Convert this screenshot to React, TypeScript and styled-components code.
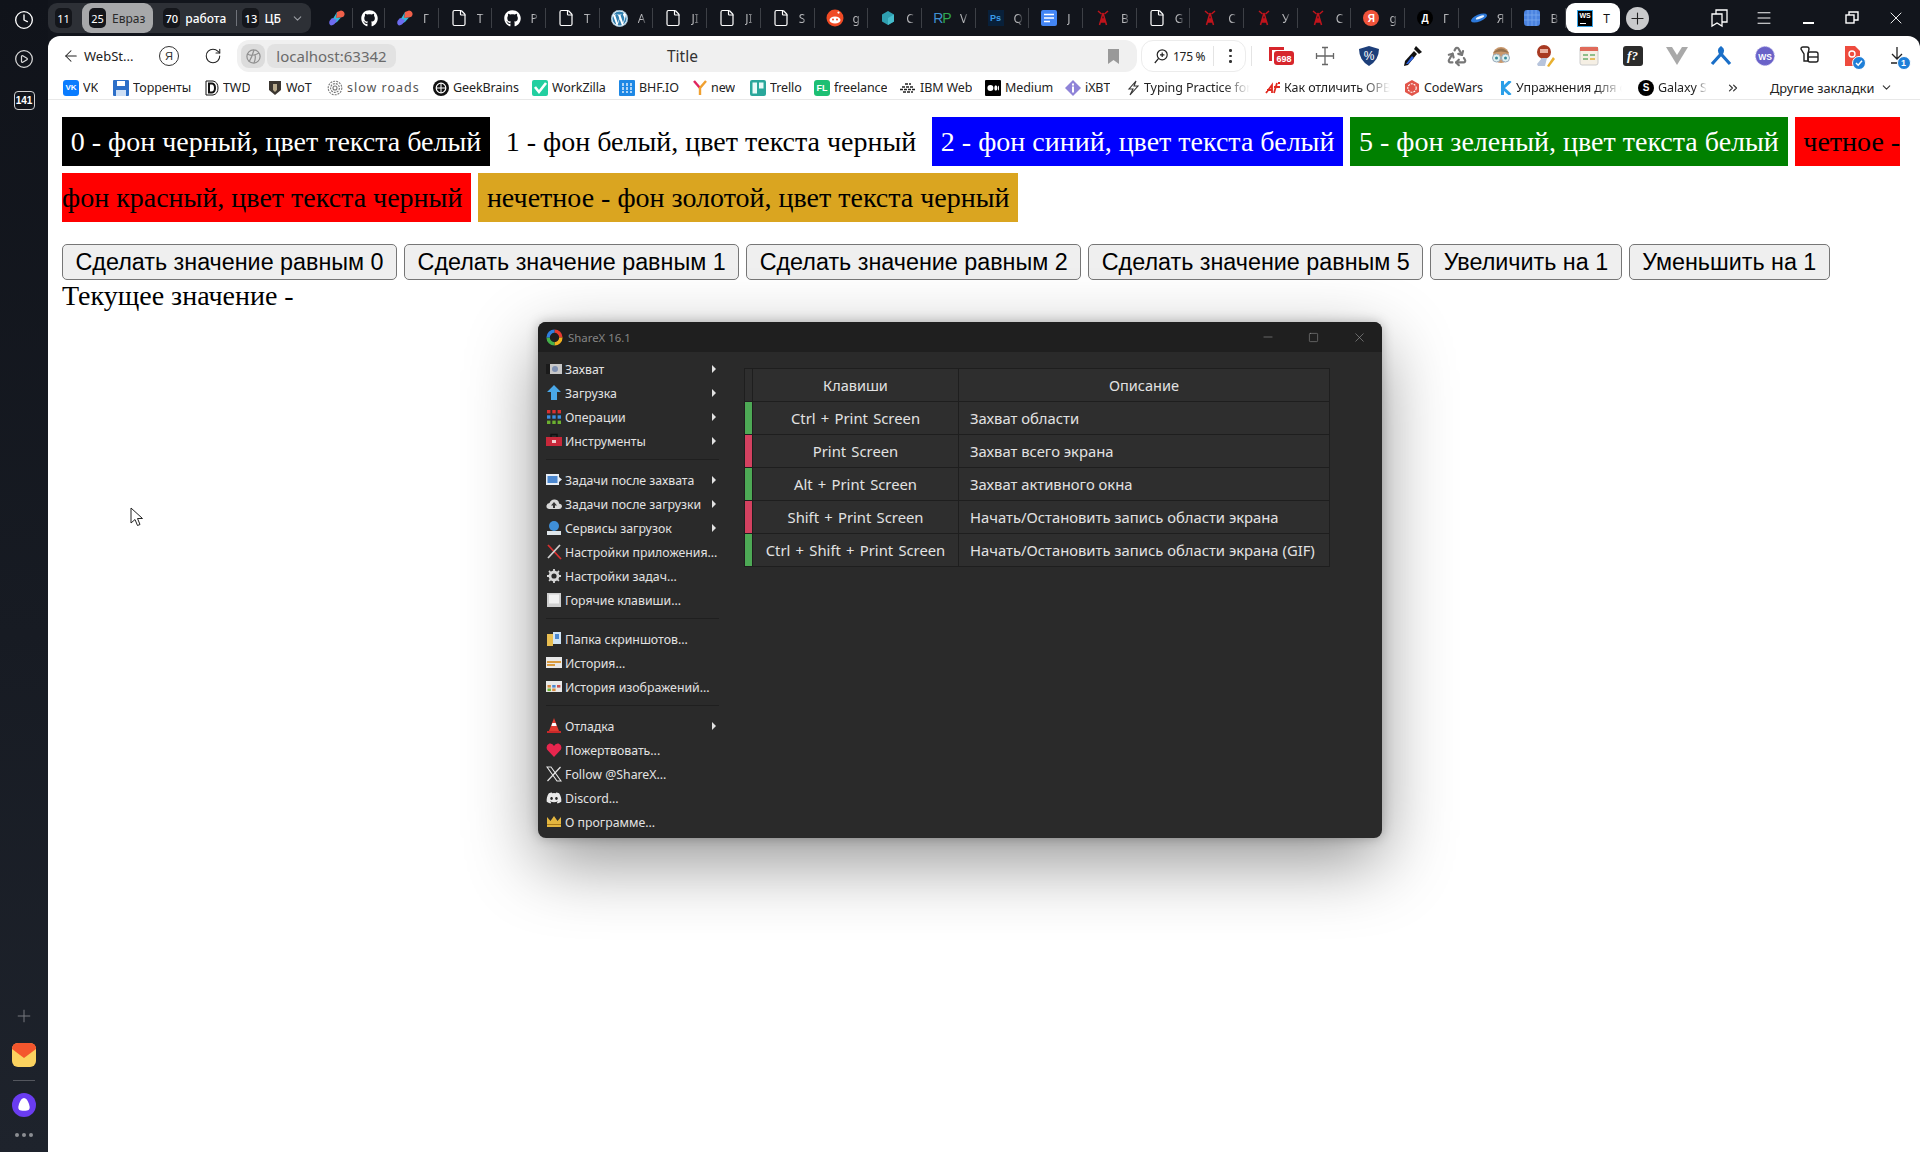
import { Fragment, ReactNode } from "react";
import styled, { createGlobalStyle } from "styled-components";
import {
  ArrowLeft,
  ChevronDown,
  ChevronsRight,
  CirclePlay,
  Clock,
  File,
  Menu as MenuIcon,
  Minus,
  Plus,
  Recycle,
  RotateCw,
  Square,
  X
} from "lucide-react";
import { FaDiscord, FaGithub, FaWordpress } from "react-icons/fa";

const GlobalStyle = createGlobalStyle`
  html, body {
    margin: 0;
    padding: 0;
    background: #fff;
  }
`;

// drawn favicons
const FigmaBlob = () => (
  <svg width="18" height="18" viewBox="0 0 18 18">
    <path d="M9 3 L13 1.5 Q17 2 16.5 6 Q16 8 13 8.5 L8 9 Z" fill="#f0604a" />
    <path d="M9 3 L8 9 L13 8.5 L9 13 Q6 15 3 13 Z" fill="#35b8d8" />
    <path d="M4 9 L9 11 Q7 16 3 16.5 Q0.5 15 1.5 12 Z" fill="#6d6cf0" />
  </svg>
);

const GithubFav = () => <FaGithub size={17} color="#fff" />;
const DocFav = () => <File size={18} color="#fff" strokeWidth={1.6} />;

const WordpressFav = () => (
  <WpBack>
    <FaWordpress size={17} color="#2f7fb0" />
  </WpBack>
);

const RedditFav = () => (
  <svg width="18" height="18" viewBox="0 0 18 18">
    <circle cx="9" cy="9" r="8.5" fill="#f04a24" />
    <ellipse cx="9" cy="11" rx="5.5" ry="3.6" fill="#fff" />
    <circle cx="7" cy="10.5" r="1" fill="#f04a24" />
    <circle cx="11" cy="10.5" r="1" fill="#f04a24" />
    <circle cx="12.5" cy="3.6" r="1.1" fill="#fff" />
  </svg>
);

const CubeFav = () => (
  <svg width="16" height="16" viewBox="0 0 16 16">
    <path d="M8 1 L14 4.5 V11.5 L8 15 L2 11.5 V4.5 Z" fill="#2f9fb0" />
    <path d="M8 8 L14 4.5 V11.5 L8 15 Z" fill="#45bccb" />
  </svg>
);

const DocsFav = () => (
  <svg width="16" height="16" viewBox="0 0 16 16">
    <rect width="16" height="16" rx="2" fill="#4285f4" />
    <path d="M3 4.5 H13 M3 8 H13 M3 11.5 H9" stroke="#fff" strokeWidth="1.6" />
  </svg>
);

const TowerFav = () => (
  <svg width="16" height="18" viewBox="0 0 16 18">
    <path
      d="M8 4 L4.5 16 M8 4 L11.5 16 M6 10 H10 M5 13 H11 M6 10 L11 13 M10 10 L5 13 M3 2 L6.5 5 M13 2 L9.5 5"
      stroke="#c0141c"
      strokeWidth="1.5"
      fill="none"
    />
  </svg>
);

const UfoFav = () => (
  <svg width="18" height="18" viewBox="0 0 18 18">
    <ellipse cx="9" cy="9" rx="8.5" ry="3.4" transform="rotate(-22 9 9)" fill="#2c78d8" />
    <ellipse cx="10" cy="8.4" rx="4.5" ry="1.3" transform="rotate(-22 10 8.4)" fill="#eaf4ff" />
  </svg>
);

const BlueFav = () => (
  <svg width="16" height="16" viewBox="0 0 16 16">
    <rect width="16" height="16" rx="3" fill="#4b83e0" />
    <path d="M4 0 V16 M8 0 V16 M12 0 V16 M0 5 H16 M0 10 H16" stroke="#79a9f0" strokeWidth="0.8" />
  </svg>
);

// one entry per browser tab after the group
const getTabs = (): { icon: ReactNode; letter?: string }[] => [
  { icon: <FigmaBlob /> },
  { icon: <GithubFav /> },
  { icon: <FigmaBlob />, letter: "Г" },
  { icon: <DocFav />, letter: "T" },
  { icon: <GithubFav />, letter: "P" },
  { icon: <DocFav />, letter: "T" },
  { icon: <WordpressFav />, letter: "A" },
  { icon: <DocFav />, letter: "JI" },
  { icon: <DocFav />, letter: "JI" },
  { icon: <DocFav />, letter: "S" },
  { icon: <RedditFav />, letter: "g" },
  { icon: <CubeFav />, letter: "C" },
  {
    icon: (
      <RpMark>
        <span>R</span>
        <b>P</b>
      </RpMark>
    ),
    letter: "V"
  },
  { icon: <PsMark>Ps</PsMark>, letter: "Q" },
  { icon: <DocsFav />, letter: "J" },
  { icon: <TowerFav />, letter: "B" },
  { icon: <DocFav />, letter: "G" },
  { icon: <TowerFav />, letter: "C" },
  { icon: <TowerFav />, letter: "У" },
  { icon: <TowerFav />, letter: "C" },
  { icon: <RoundMark $bg="#f0533a" $fg="#fff">Я</RoundMark>, letter: "g" },
  { icon: <RoundMark $bg="#000" $fg="#fff">Д</RoundMark>, letter: "Г" },
  { icon: <UfoFav />, letter: "Я" },
  { icon: <BlueFav />, letter: "B" }
];

// bookmark bar: left edges come from the fixed item widths
const getBookmarks = (): { w: number; label: string; icon: ReactNode; fade?: boolean; spaced?: boolean }[] => [
  { w: 50, label: "VK", icon: <Tile $bg="#0a7cff" $fg="#fff" $size={8}>VK</Tile> },
  {
    w: 92,
    label: "Торренты",
    icon: (
      <svg width="16" height="16" viewBox="0 0 16 16">
        <rect width="16" height="16" rx="1" fill="#2d6fc8" />
        <rect x="4" y="1" width="8" height="5" fill="#fff" />
        <rect x="3" y="10" width="10" height="6" fill="#cfe0f5" />
      </svg>
    )
  },
  {
    w: 63,
    label: "TWD",
    icon: (
      <svg width="14" height="16" viewBox="0 0 14 16" fill="none" stroke="#111">
        <path d="M1 1 H8 Q13 2 13 8 Q13 14 8 15 H1 Z" strokeWidth="1" />
        <path d="M4 3.5 H7 Q10 4 10 8 Q10 12 7 12.5 H4 Z" strokeWidth="2" />
      </svg>
    )
  },
  {
    w: 59,
    label: "WoT",
    icon: (
      <svg width="14" height="16" viewBox="0 0 14 16">
        <path d="M1 1 H13 V10 L7 15 L1 10 Z" fill="#3b3630" />
        <path d="M5 4 H9 V10 L7 12 L5 10 Z" fill="#b9ab8e" />
      </svg>
    )
  },
  {
    w: 106,
    label: "slow roads",
    spaced: true,
    icon: (
      <svg width="16" height="16" viewBox="0 0 16 16" fill="none" stroke="#777" strokeWidth="1.1">
        <circle cx="8" cy="8" r="6.8" strokeDasharray="2 1" />
        <circle cx="8" cy="8" r="4.4" strokeDasharray="2 1" />
        <circle cx="8" cy="8" r="2" />
      </svg>
    )
  },
  {
    w: 99,
    label: "GeekBrains",
    icon: (
      <svg width="16" height="16" viewBox="0 0 16 16" fill="none">
        <circle cx="8" cy="8" r="8" fill="#111" />
        <circle cx="8" cy="8" r="4.8" stroke="#fff" strokeWidth="1.2" />
        <path d="M8 3 V13 M3 8 H13" stroke="#fff" strokeWidth="1" />
      </svg>
    )
  },
  {
    w: 87,
    label: "WorkZilla",
    icon: (
      <svg width="16" height="16" viewBox="0 0 16 16">
        <rect width="16" height="16" rx="2" fill="#22cfa0" />
        <path d="M3 7 L7 12 L14 3" stroke="#fff" strokeWidth="2.6" fill="none" />
      </svg>
    )
  },
  {
    w: 74,
    label: "BHF.IO",
    icon: (
      <svg width="16" height="16" viewBox="0 0 16 16">
        <rect width="16" height="16" rx="1" fill="#1e88e5" />
        <path d="M4 3 V13 M8 3 V13 M12 3 V13" stroke="#fff" strokeWidth="1.3" strokeDasharray="3 1" />
      </svg>
    )
  },
  {
    w: 57,
    label: "new",
    icon: (
      <svg width="14" height="16" viewBox="0 0 14 16" fill="none" strokeWidth="2.4">
        <path d="M1 1 L7 8" stroke="#e0245e" />
        <path d="M13 1 L7 8 V15" stroke="#f0a030" />
      </svg>
    )
  },
  {
    w: 64,
    label: "Trello",
    icon: (
      <svg width="16" height="16" viewBox="0 0 16 16">
        <rect width="16" height="16" rx="2" fill="#2aa79b" />
        <rect x="2.5" y="2.5" width="4.5" height="11" fill="#e8fbf8" />
        <rect x="9" y="2.5" width="4.5" height="6" fill="#e8fbf8" />
      </svg>
    )
  },
  { w: 86, label: "freelance", icon: <Tile $bg="#1dbf73" $fg="#fff" $size={9}>FL</Tile> },
  {
    w: 85,
    label: "IBM Web",
    icon: (
      <svg width="16" height="12" viewBox="0 0 16 12" stroke="#222" strokeWidth="1.4">
        <path d="M5 2 H11 M2 5 H14 M0 7.5 H16 M3 10 H13" strokeDasharray="3 1" />
      </svg>
    )
  },
  {
    w: 80,
    label: "Medium",
    icon: (
      <svg width="16" height="16" viewBox="0 0 16 16">
        <rect width="16" height="16" rx="1" fill="#000" />
        <circle cx="5.4" cy="8" r="3" fill="#fff" />
        <ellipse cx="10.8" cy="8" rx="1.5" ry="2.8" fill="#fff" />
        <ellipse cx="13.4" cy="8" rx="0.6" ry="2.5" fill="#fff" />
      </svg>
    )
  },
  {
    w: 62,
    label: "iXBT",
    icon: (
      <svg width="16" height="16" viewBox="0 0 16 16">
        <path d="M8 0 L16 8 L8 16 L0 8 Z" fill="#8f83d8" />
        <rect x="7" y="6.5" width="2" height="6" fill="#fff" />
        <rect x="7" y="3.5" width="2" height="2" fill="#fff" />
      </svg>
    )
  },
  {
    w: 138,
    label: "Typing Practice for",
    fade: true,
    icon: (
      <svg width="13" height="16" viewBox="0 0 13 16">
        <path d="M9 1 L2 9 H6 L3 15 L11 6 H7 Z" fill="none" stroke="#333" strokeWidth="1.1" />
      </svg>
    )
  },
  {
    w: 139,
    label: "Как отличить ОРВ",
    fade: true,
    icon: (
      <svg width="15" height="16" viewBox="0 0 15 16" fill="none" stroke="#e02a20" strokeWidth="1.8">
        <path d="M1 13 L7 5 V13 M7 10 H2 M9 13 L12 3 M9 7 H15 M13 3 H15" />
      </svg>
    )
  },
  {
    w: 96,
    label: "CodeWars",
    icon: (
      <svg width="16" height="16" viewBox="0 0 16 16">
        <path d="M8 0 L15 4 V12 L8 16 L1 12 V4 Z" fill="#e2554a" />
        <circle cx="8" cy="8" r="4.2" fill="none" stroke="#fff" strokeWidth="1.1" strokeDasharray="2 1" />
      </svg>
    )
  },
  {
    w: 138,
    label: "Упражнения для с",
    fade: true,
    icon: (
      <svg width="12" height="14" viewBox="0 0 12 14" fill="none" stroke="#2b9fe8" strokeWidth="3">
        <path d="M2.5 0 V14 M10.5 0 L3 7 L10.5 14" />
      </svg>
    )
  },
  {
    w: 82,
    label: "Galaxy S",
    fade: true,
    icon: <RoundMark $bg="#000" $fg="#fff">S</RoundMark>
  }
];

// toolbar extension icons, one 44px slot each
const getExtensions = (): ReactNode[] => [
  <svg key="video" width="26" height="24" viewBox="0 0 26 24">
    <path d="M1 3 H16 V6 H4 V17 H1 Z" fill="#d7262c" />
    <rect x="6" y="7" width="20" height="14" rx="3" fill="#d7262c" />
    <text x="16" y="18" fontSize="9" fontFamily="Liberation Sans" fontWeight="700" fill="#fff" textAnchor="middle">
      698
    </text>
  </svg>,
  <svg key="move" width="20" height="20" viewBox="0 0 20 20" stroke="#666" strokeWidth="1.3">
    <path d="M10 1 V19 M1 10 H19 M7 1.5 H13 M7 18.5 H13 M1.5 7 V13 M18.5 7 V13" />
  </svg>,
  <svg key="shield" width="22" height="22" viewBox="0 0 22 22">
    <path d="M11 1 L21 4 Q21 15 11 21 Q1 15 1 4 Z" fill="#1d3f7a" />
    <text x="11" y="15" fontSize="12" fontFamily="Liberation Sans" fill="#fff" textAnchor="middle">
      %
    </text>
  </svg>,
  <svg key="dropper" width="20" height="22" viewBox="0 0 20 22">
    <path d="M13 1 L19 7 L16 9 L11 4 Z" fill="#111" />
    <path d="M11 6 L14 9 L5 20 L1 21 L2 16 Z" fill="#111" />
    <path d="M9 11 L11 13 L5 19 L3 19 Z" fill="#2c62e0" />
  </svg>,
  <Recycle key="recycle" size={22} color="#777" strokeWidth={2.4} />,
  <svg key="face" width="22" height="22" viewBox="0 0 22 22">
    <circle cx="11" cy="10" r="8" fill="#c9986c" />
    <path d="M3 8 Q11 -1 19 8 Q11 5 3 8 Z" fill="#96724f" />
    <circle cx="6.5" cy="13" r="4" fill="#dff1f1" stroke="#9ab" />
    <circle cx="15.5" cy="13" r="4" fill="#dff1f1" stroke="#9ab" />
    <circle cx="6.5" cy="13" r="1.5" fill="#3a8a9a" />
    <circle cx="15.5" cy="13" r="1.5" fill="#3a8a9a" />
  </svg>,
  <svg key="bag" width="22" height="24" viewBox="0 0 22 24">
    <ellipse cx="10" cy="8" rx="7" ry="7" fill="#a83a22" />
    <rect x="6" y="5" width="8" height="4" fill="#e8b0a0" />
    <path d="M3 20 L8 14 H13 L11 22 H4 Z" fill="#b7c4dc" />
    <path d="M13 22 L19 13 L21 15 L15 23 Z" fill="#e8b030" />
  </svg>,
  <svg key="calendar" width="20" height="20" viewBox="0 0 20 20">
    <rect x="1" y="1" width="18" height="18" rx="2" fill="#f5efe4" stroke="#ccc" />
    <rect x="1" y="1" width="18" height="4" fill="#e06a5a" />
    <path d="M4 9 H9 M11 9 H16 M4 13 H9" stroke="#6cae6c" strokeWidth="1.6" />
    <path d="M11 13 H16" stroke="#e3b13d" strokeWidth="1.6" />
  </svg>,
  <FxTile key="fx">f?</FxTile>,
  <svg key="vee" width="22" height="20" viewBox="0 0 22 20">
    <path d="M0 1 H22 L11 19 Z" fill="#a9a9a9" />
    <path d="M6 1 H16 L11 9 Z" fill="#fff" />
  </svg>,
  <svg key="ribbon" width="22" height="22" viewBox="0 0 22 22" fill="none" stroke="#1a6fc8" strokeWidth="3.2">
    <path d="M2 19 L11 9 Q14 5 11 3 Q8 5 11 9 L20 19" />
  </svg>,
  <svg key="ws" width="20" height="20" viewBox="0 0 20 20">
    <circle cx="10" cy="10" r="9.4" fill="#6a62c8" stroke="#a6a1e2" strokeDasharray="1.5 1" />
    <text x="10" y="13.5" fontSize="8.5" fontFamily="Liberation Sans" fontWeight="700" fill="#fff" textAnchor="middle">
      WS
    </text>
  </svg>,
  <svg key="ext" width="20" height="20" viewBox="0 0 20 20" fill="none" stroke="#222" strokeWidth="1.4">
    <path d="M2 3 Q2 1 4 1 H8 Q10 1 10 3 L9 8 V15 H5 V8 Z" />
    <rect x="9" y="6" width="10" height="10" rx="2" />
    <path d="M9 11 H19" />
  </svg>,
  <PdfStack key="pdf">
    <svg width="15" height="20" viewBox="0 0 15 20">
      <path d="M0 0 H10 L15 5 V20 H0 Z" fill="#ee4b3e" />
      <circle cx="7" cy="8" r="3" fill="none" stroke="#fff" strokeWidth="1.4" />
    </svg>
    <Badge $bg="#1f7fd8">
      <svg width="8" height="8" viewBox="0 0 8 8" fill="none" stroke="#fff" strokeWidth="1.5">
        <path d="M1 4 L3.2 6.2 L7 1.8" />
      </svg>
    </Badge>
  </PdfStack>,
  <PdfStack key="dl">
    <svg width="16" height="20" viewBox="0 0 16 20" fill="none" stroke="#222" strokeWidth="1.3">
      <path d="M8 1 V13 M3 8 L8 13 L13 8 M2 17 H14" />
    </svg>
    <Badge $bg="#1f7fd8">1</Badge>
  </PdfStack>
];

const buttons = [
  "Сделать значение равным 0",
  "Сделать значение равным 1",
  "Сделать значение равным 2",
  "Сделать значение равным 5",
  "Увеличить на 1",
  "Уменьшить на 1"
];

// window menu icons
const I = ({ children }: { children: ReactNode }) => (
  <svg width="16" height="16" viewBox="0 0 16 16">
    {children}
  </svg>
);

const menuIcons: Record<string, ReactNode> = {
  camera: (
    <I>
      <rect x="0" y="3" width="16" height="10" fill="#c8c8c8" />
      <rect x="0" y="3" width="4" height="10" fill="#1a1a1a" />
      <circle cx="9" cy="8" r="3" fill="#7d8fb0" />
    </I>
  ),
  up: (
    <I>
      <path d="M8 0 L15 7 H11 V15 H5 V7 H1 Z" fill="#4aa8e8" />
    </I>
  ),
  grid: (
    <I>
      <g fill="#d83030">
        <rect x="1" y="1" width="3.4" height="3.4" />
        <rect x="6.3" y="1" width="3.4" height="3.4" />
        <rect x="11.6" y="1" width="3.4" height="3.4" />
      </g>
      <g fill="#3a8ee0">
        <rect x="1" y="6.3" width="3.4" height="3.4" />
        <rect x="6.3" y="6.3" width="3.4" height="3.4" />
        <rect x="11.6" y="6.3" width="3.4" height="3.4" />
      </g>
      <g fill="#6cb030">
        <rect x="1" y="11.6" width="3.4" height="3.4" />
        <rect x="6.3" y="11.6" width="3.4" height="3.4" />
        <rect x="11.6" y="11.6" width="3.4" height="3.4" />
      </g>
    </I>
  ),
  toolbox: (
    <I>
      <path d="M5 4 V1.5 H11 V4" fill="none" stroke="#111" strokeWidth="1.4" />
      <rect x="0" y="4" width="16" height="9" fill="#c8283a" />
      <rect x="6" y="7" width="4" height="3" fill="#f0d0d0" />
    </I>
  ),
  image: (
    <I>
      <rect x="0" y="2" width="13" height="11" fill="#e8eef5" />
      <rect x="1.5" y="4" width="10" height="7" fill="#4c88d0" />
      <path d="M13 5 L16 7.5 L13 10 Z" fill="#e8eef5" />
    </I>
  ),
  cloud: (
    <I>
      <path d="M3 13 Q0 12.5 0.5 9.5 Q1 7 3.5 7 Q5 3 9 3.5 Q13 4 13 7.5 Q16 8 16 10.5 Q15.5 13 13 13 Z" fill="#d8d8d8" />
      <path d="M8 6 L11 9.5 H9 V12 H7 V9.5 H5 Z" fill="#333" />
    </I>
  ),
  tray: (
    <I>
      <circle cx="8" cy="6" r="5" fill="#3f8fd8" />
      <rect x="1" y="11" width="14" height="4" fill="#dfe5ea" />
    </I>
  ),
  tools: (
    <I>
      <path d="M2 1 L15 15" stroke="#d83030" strokeWidth="1.8" />
      <path d="M14 1 L2 14" stroke="#cfcfcf" strokeWidth="1.8" />
    </I>
  ),
  gear: (
    <I>
      <circle cx="8" cy="8" r="4" fill="none" stroke="#d8d8d8" strokeWidth="2.8" />
      <path d="M8 1 V15 M1 8 H15 M3 3 L13 13 M13 3 L3 13" stroke="#d8d8d8" strokeWidth="1.8" strokeDasharray="2.5 9" />
    </I>
  ),
  key: (
    <I>
      <rect x="1" y="1" width="14" height="14" fill="#cfcfcf" />
      <rect x="3" y="2.5" width="10" height="9" fill="#f0f0f0" />
    </I>
  ),
  folder: (
    <I>
      <path d="M1 3 H7 V15 H1 Z" fill="#e8bd50" />
      <rect x="7" y="1" width="8" height="12" fill="#d0e4f5" />
      <rect x="9" y="3" width="4" height="5" fill="#4c88d0" />
    </I>
  ),
  history: (
    <I>
      <rect x="0" y="2" width="16" height="11" fill="#e8e8e8" />
      <rect x="1" y="6" width="14" height="2" fill="#d89a40" />
      <rect x="1" y="9" width="8" height="2" fill="#d89a40" />
    </I>
  ),
  images: (
    <I>
      <rect x="0" y="2" width="16" height="11" fill="#e8e8e8" />
      <rect x="1.5" y="6" width="3.4" height="2.6" fill="#d88a40" />
      <rect x="6.2" y="6" width="3.4" height="2.6" fill="#4c88d0" />
      <rect x="11" y="6" width="3.4" height="2.6" fill="#c85050" />
      <rect x="1.5" y="9.5" width="3.4" height="2.6" fill="#6cb030" />
      <rect x="6.2" y="9.5" width="3.4" height="2.6" fill="#d88a40" />
    </I>
  ),
  cone: (
    <I>
      <path d="M8 0 L13 13 H3 Z" fill="#e03a30" />
      <path d="M6.3 5 H9.7 L10.6 8 H5.4 Z" fill="#fff" />
      <rect x="1" y="13" width="14" height="2" fill="#c8282a" />
    </I>
  ),
  heart: (
    <I>
      <path d="M8 15 L1 7.5 Q-0.5 3 3.5 1.5 Q6.5 1 8 4 Q9.5 1 12.5 1.5 Q16.5 3 15 7.5 Z" fill="#e8264e" />
    </I>
  ),
  x: (
    <I>
      <path d="M1 1 H5 L15 15 H11 Z" fill="none" stroke="#e6e6e6" strokeWidth="1.1" />
      <path d="M14.5 1 L1.5 15" stroke="#e6e6e6" strokeWidth="1.2" />
    </I>
  ),
  discord: <FaDiscord size={16} color="#e8e8e8" />,
  crown: (
    <I>
      <path d="M1 3 L4.5 7 L8 2 L11.5 7 L15 3 V13 H1 Z" fill="#e4b63f" />
      <rect x="1" y="10" width="14" height="1" fill="#a87818" />
    </I>
  )
};

type MenuEntry = { icon: string; label: string; more?: boolean } | "sep";

const menu: MenuEntry[] = [
  { icon: "camera", label: "Захват", more: true },
  { icon: "up", label: "Загрузка", more: true },
  { icon: "grid", label: "Операции", more: true },
  { icon: "toolbox", label: "Инструменты", more: true },
  "sep",
  { icon: "image", label: "Задачи после захвата", more: true },
  { icon: "cloud", label: "Задачи после загрузки", more: true },
  { icon: "tray", label: "Сервисы загрузок", more: true },
  { icon: "tools", label: "Настройки приложения..." },
  { icon: "gear", label: "Настройки задач..." },
  { icon: "key", label: "Горячие клавиши..." },
  "sep",
  { icon: "folder", label: "Папка скриншотов..." },
  { icon: "history", label: "История..." },
  { icon: "images", label: "История изображений..." },
  "sep",
  { icon: "cone", label: "Отладка", more: true },
  { icon: "heart", label: "Пожертвовать..." },
  { icon: "x", label: "Follow @ShareX..." },
  { icon: "discord", label: "Discord..." },
  { icon: "crown", label: "О программе..." }
];

const hotkeys = [
  { ok: true, keys: "Ctrl + Print Screen", text: "Захват области" },
  { ok: false, keys: "Print Screen", text: "Захват всего экрана" },
  { ok: true, keys: "Alt + Print Screen", text: "Захват активного окна" },
  { ok: false, keys: "Shift + Print Screen", text: "Начать/Остановить запись области экрана" },
  { ok: true, keys: "Ctrl + Shift + Print Screen", text: "Начать/Остановить запись области экрана (GIF)" }
];

export default function App() {
  return (
    <>
      <GlobalStyle />
      <Desktop>
        <Sidebar>
          <RailButton>
            <Clock size={20} color="#fff" strokeWidth={1.6} />
          </RailButton>
          <RailButton>
            <CirclePlay size={20} color="#d8d8d8" strokeWidth={1.5} />
          </RailButton>
          <Counter>141</Counter>
          <RailSpacer />
          <Plus size={20} color="#77797f" strokeWidth={1.2} />
          <RailApp width="24" height="24" viewBox="0 0 24 24">
            <rect width="24" height="24" rx="6" fill="#fbd25f" />
            <path d="M0 6 Q0 0 6 0 H18 Q24 0 24 6 L12 15 Z" fill="#f4562d" />
          </RailApp>
          <RailLine />
          <svg width="24" height="24" viewBox="0 0 24 24">
            <circle cx="12" cy="12" r="12" fill="#6a3cf0" />
            <path d="M12 5 Q15 5 17 11 Q19 17 15 17.5 Q12 18 9 17.5 Q5 17 7 11 Q9 5 12 5 Z" fill="#fff" />
          </svg>
          <RailDots>
            <i />
            <i />
            <i />
          </RailDots>
        </Sidebar>

        <Browser>
          <TabStrip>
            <TabGroup>
              <GroupChip>
                <Count>11</Count>
              </GroupChip>
              <GroupChip $active>
                <Count>25</Count>
                <span>Евраз</span>
              </GroupChip>
              <GroupChip $plain>
                <Count>70</Count>
                <span>работа</span>
              </GroupChip>
              <GroupDivider />
              <GroupChip $plain>
                <Count>13</Count>
                <span>ЦБ</span>
              </GroupChip>
              <ChevronDown size={13} color="#9a9da3" />
            </TabGroup>
            <Tabs>
              {getTabs().map((t, i) => (
                <Tab key={i} $pinned={!t.letter}>
                  <TabIcon>{t.icon}</TabIcon>
                  {t.letter && <TabLetter>{t.letter}</TabLetter>}
                </Tab>
              ))}
              <ActiveTab>
                <WsMark>
                  <span>WS</span>
                  <u />
                </WsMark>
                <span>T</span>
              </ActiveTab>
              <NewTab>
                <Plus size={19} color="#222" strokeWidth={1.4} />
              </NewTab>
            </Tabs>
            <WindowButtons>
              <WinButton>
                <svg width="18" height="20" viewBox="0 0 18 20" fill="none" stroke="#fff" strokeWidth="1.3">
                  <path d="M1 6 H11 V18 L6 15 L1 18 Z" />
                  <path d="M5 6 V2 H16 V14 H11" />
                </svg>
              </WinButton>
              <WinButton>
                <MenuIcon size={18} color="#fff" strokeWidth={1.3} />
              </WinButton>
              <WinButton>
                <MinBar />
              </WinButton>
              <WinButton>
                <svg width="14" height="14" viewBox="0 0 14 14" fill="none" stroke="#fff" strokeWidth="1.4">
                  <rect x="1" y="4" width="8" height="8" />
                  <path d="M4 4 V1 H13 V9 H9" />
                </svg>
              </WinButton>
              <WinButton>
                <X size={20} color="#fff" strokeWidth={1.1} />
              </WinButton>
            </WindowButtons>
          </TabStrip>

          <Chrome>
            <Toolbar>
              <BackLink>
                <ArrowLeft size={18} color="#222" strokeWidth={1.4} />
                <span>WebSt...</span>
              </BackLink>
              <ToolSlot>
                <YaCircle>Я</YaCircle>
              </ToolSlot>
              <ToolSlot>
                <RotateCw size={18} color="#222" strokeWidth={1.4} />
              </ToolSlot>
              <AddressBar>
                <GlobeChip>
                  <svg width="15" height="15" viewBox="0 0 15 15" fill="none" stroke="#8f8f8f" strokeWidth="1.2">
                    <circle cx="7.5" cy="7.5" r="6.6" />
                    <path d="M1.5 5 Q6 8 13 4 M3 13 Q6 8 8 1 M8 14 Q10 9 9 6" />
                  </svg>
                </GlobeChip>
                <HostChip>localhost:63342</HostChip>
                <PageTitle>Title</PageTitle>
                <svg width="11" height="15" viewBox="0 0 11 15">
                  <path d="M0 0 H11 V15 L5.5 11 L0 15 Z" fill="#999" />
                </svg>
              </AddressBar>
              <ZoomPill>
                <svg width="14" height="15" viewBox="0 0 14 15" fill="none" stroke="#222" strokeWidth="1.2">
                  <circle cx="8.2" cy="5.8" r="5" />
                  <path d="M4.6 9.4 L0.8 14 M8.2 3.6 V8 M6 5.8 H10.4" />
                </svg>
                <ZoomValue>175 %</ZoomValue>
                <PillDivider />
                <Kebab>
                  <i />
                  <i />
                  <i />
                </Kebab>
              </ZoomPill>
              <ToolDivider />
              <Extensions>
                {getExtensions().map((e, i) => (
                  <ExtSlot key={i}>{e}</ExtSlot>
                ))}
              </Extensions>
            </Toolbar>

            <BookmarkBar>
              {getBookmarks().map((b) => (
                <Bookmark key={b.label} $w={b.w}>
                  <BookmarkIcon>{b.icon}</BookmarkIcon>
                  <BookmarkLabel $fade={b.fade} $spaced={b.spaced}>
                    {b.label}
                  </BookmarkLabel>
                </Bookmark>
              ))}
              <More>
                <ChevronsRight size={14} color="#333" />
              </More>
              <OtherBookmarks>
                <span>Другие закладки</span>
                <ChevronDown size={13} color="#333" />
              </OtherBookmarks>
            </BookmarkBar>
          </Chrome>

          <Page>
            <Legend>
              <Swatch $bg="#000" $fg="#fff">0 - фон черный, цвет текста белый</Swatch>{" "}
              <Swatch $bg="#fff" $fg="#000">1 - фон белый, цвет текста черный</Swatch>{" "}
              <Swatch $bg="#00f" $fg="#fff">2 - фон синий, цвет текста белый</Swatch>{" "}
              <Swatch $bg="#008000" $fg="#fff">5 - фон зеленый, цвет текста белый</Swatch>{" "}
              <Swatch $bg="#f00" $fg="#000">четное - фон красный, цвет текста черный</Swatch>{" "}
              <Swatch $bg="#daa520" $fg="#000">нечетное - фон золотой, цвет текста черный</Swatch>
            </Legend>
            <Buttons>
              {buttons.map((b) => (
                <Fragment key={b}>
                  <PageButton type="button">{b}</PageButton>{" "}
                </Fragment>
              ))}
            </Buttons>
            <Current>Текущее значение -</Current>

            <ShareX>
              <TitleBar>
                <svg width="17" height="17" viewBox="0 0 16 16" fill="none" strokeWidth="3.2">
                  <path d="M8 2 A6 6 0 0 1 14 8" stroke="#e63a30" />
                  <path d="M14 8 A6 6 0 0 1 8 14" stroke="#f2b01e" />
                  <path d="M8 14 A6 6 0 0 1 2 8" stroke="#46b04a" />
                  <path d="M2 8 A6 6 0 0 1 8 2" stroke="#2f7fe0" />
                </svg>
                <WinTitle>ShareX 16.1</WinTitle>
                <WinControls>
                  <Minus size={14} color="#999" strokeWidth={1} />
                  <Square size={11} color="#999" strokeWidth={1.2} />
                  <X size={15} color="#999" strokeWidth={1} />
                </WinControls>
              </TitleBar>
              <WinBody>
                <AppMenu>
                  {menu.map((m, i) =>
                    m === "sep" ? (
                      <MenuSep key={i} />
                    ) : (
                      <MenuRow key={m.label}>
                        <MenuGlyph>{menuIcons[m.icon]}</MenuGlyph>
                        <MenuLabel>{m.label}</MenuLabel>
                        {m.more && <MenuArrow />}
                      </MenuRow>
                    )
                  )}
                </AppMenu>
                <HotkeyTable>
                  <thead>
                    <tr>
                      <StatusHead />
                      <HeadCell>Клавиши</HeadCell>
                      <HeadCell>Описание</HeadCell>
                    </tr>
                  </thead>
                  <tbody>
                    {hotkeys.map((h) => (
                      <tr key={h.text}>
                        <StatusCell $ok={h.ok} />
                        <KeysCell>{h.keys}</KeysCell>
                        <TextCell>{h.text}</TextCell>
                      </tr>
                    ))}
                  </tbody>
                </HotkeyTable>
              </WinBody>
            </ShareX>

            <Pointer width="14" height="20" viewBox="0 0 14 20">
              <path d="M1 1 V16 L5 12.5 L7.5 18.5 L10 17.5 L7.5 11.5 H12.5 Z" fill="#fff" stroke="#222" strokeWidth="1" />
            </Pointer>
          </Page>
        </Browser>
      </Desktop>
    </>
  );
}

const Desktop = styled.div`
  display: flex;
  width: 1920px;
  height: 1152px;
  overflow: hidden;
  background: #12151c;
  font-family: "Noto Sans", sans-serif;
`;

const Sidebar = styled.div`
  display: flex;
  flex-direction: column;
  align-items: center;
  flex: 0 0 48px;
  padding-top: 4px;
  box-sizing: border-box;
  background: linear-gradient(180deg, #10131a 0%, #171b23 55%, #1e232c 100%);
`;

const RailButton = styled.div`
  display: flex;
  align-items: center;
  justify-content: center;
  height: 32px;
  margin-bottom: 7px;
`;

const Counter = styled.div`
  display: flex;
  align-items: center;
  justify-content: center;
  width: 19px;
  height: 17px;
  margin-top: 9px;
  border: 1px solid #d0d0d0;
  border-radius: 4px;
  color: #fff;
  font: 700 10px "Liberation Sans", sans-serif;
`;

const RailSpacer = styled.div`
  flex: 1;
`;

const RailApp = styled.svg`
  margin-top: 17px;
`;

const RailLine = styled.div`
  width: 22px;
  height: 1px;
  margin: 13px 0 12px;
  background: #54575e;
`;

const RailDots = styled.div`
  display: flex;
  gap: 3px;
  margin: 16px 0 15px;

  i {
    width: 4px;
    height: 4px;
    border-radius: 50%;
    background: #8c8e93;
  }
`;

const Browser = styled.div`
  display: flex;
  flex-direction: column;
  flex: 1;
  min-width: 0;
`;

const TabStrip = styled.div`
  display: flex;
  align-items: center;
  flex: 0 0 36px;
  color: #fff;
`;

const TabGroup = styled.div`
  display: flex;
  align-items: center;
  flex: 0 0 263px;
  height: 30px;
  box-sizing: border-box;
  border-radius: 9px;
  background: #2d3036;
  font-size: 12px;
`;

const GroupChip = styled.div<{ $active?: boolean; $plain?: boolean }>`
  display: flex;
  align-items: center;
  gap: ${(p) => (p.$active ? "6px" : "5px")};
  height: 30px;
  padding: ${(p) => (p.$plain ? "0 10px" : p.$active ? "0 8px 0 7px" : "0 10px 0 7px")};
  border-radius: 9px;
  background: ${(p) => (p.$active ? "#a7a8aa" : "transparent")};
  color: ${(p) => (p.$active ? "#2a2a2a" : "#fff")};
  font-weight: ${(p) => (p.$plain ? 500 : 400)};
`;

const Count = styled.span`
  display: flex;
  align-items: center;
  justify-content: center;
  width: 17px;
  height: 20px;
  border-radius: 5px;
  background: #14161b;
  color: #fff;
  font-size: 11px;
`;

const GroupDivider = styled.div`
  width: 1px;
  height: 16px;
  margin-right: -5px;
  background: #70737a;
`;

const Tabs = styled.div`
  display: flex;
  align-items: center;
  margin-left: 10px;
`;

const Tab = styled.div<{ $pinned?: boolean }>`
  display: flex;
  flex: 0 0 auto;
  align-items: center;
  width: ${(p) => (p.$pinned ? "32px" : "53.7px")};
  height: 20px;
  padding-left: ${(p) => (p.$pinned ? "7px" : "11px")};
  box-sizing: border-box;
  border-right: 1px solid #3d4046;
`;

const TabIcon = styled.span`
  display: flex;
  align-items: center;
  justify-content: center;
  width: 18px;
  height: 18px;
`;

const TabLetter = styled.span`
  margin-left: 9px;
  width: 9px;
  overflow: hidden;
  color: #b5b6b9;
  font-size: 12px;
  -webkit-mask-image: linear-gradient(90deg, #000 40%, transparent);
`;

const ActiveTab = styled.div`
  display: flex;
  flex: 0 0 auto;
  align-items: center;
  gap: 10px;
  width: 54px;
  height: 30px;
  padding-left: 11px;
  box-sizing: border-box;
  border-radius: 9px;
  background: #fff;
  color: #111;
  font-size: 12px;
`;

const NewTab = styled.div`
  display: flex;
  flex: 0 0 auto;
  align-items: center;
  justify-content: center;
  width: 23px;
  height: 23px;
  margin-left: 6px;
  border-radius: 50%;
  background: #c9cacc;
`;

const WindowButtons = styled.div`
  display: flex;
  margin-left: auto;
  padding-right: 2px;
`;

const WinButton = styled.div`
  display: flex;
  align-items: center;
  justify-content: center;
  width: 44px;
  height: 36px;
`;

const MinBar = styled.i`
  width: 11px;
  height: 1.5px;
  margin-top: 10px;
  background: #fff;
`;

const WpBack = styled.span`
  display: flex;
  border-radius: 50%;
  background: #fff;
`;

const RpMark = styled.span`
  display: flex;
  font: 400 14px "Liberation Sans", sans-serif;
  letter-spacing: -1px;

  span {
    color: #3f8fd0;
  }

  b {
    color: #2fa84f;
    font-weight: 400;
  }
`;

const PsMark = styled.span`
  display: flex;
  align-items: center;
  justify-content: center;
  width: 16px;
  height: 16px;
  background: #08203a;
  color: #3a9be8;
  font: 700 9px "Liberation Sans", sans-serif;
`;

const RoundMark = styled.span<{ $bg: string; $fg: string }>`
  display: flex;
  align-items: center;
  justify-content: center;
  width: 16px;
  height: 16px;
  border-radius: 50%;
  background: ${(p) => p.$bg};
  color: ${(p) => p.$fg};
  font: 700 10px "Liberation Sans", sans-serif;
`;

const WsMark = styled.span`
  position: relative;
  display: block;
  width: 16px;
  height: 17px;
  box-sizing: border-box;
  border: 1px solid #38a5e8;
  background: #000;
  color: #fff;
  font: 700 7px/9px "Liberation Sans", sans-serif;
  text-align: center;

  u {
    position: absolute;
    left: 2px;
    bottom: 2px;
    width: 6px;
    height: 1px;
    background: #fff;
  }
`;

const Chrome = styled.div`
  display: flex;
  flex-direction: column;
  flex: 0 0 64px;
  border-radius: 12px 12px 0 0;
  background: #fff;
  border-bottom: 1px solid #e8e8e8;
  box-sizing: border-box;
`;

const Toolbar = styled.div`
  display: flex;
  align-items: center;
  flex: 0 0 40px;
  padding-left: 14px;
  box-sizing: border-box;
`;

const BackLink = styled.div`
  display: flex;
  align-items: center;
  gap: 4px;
  width: 95px;
  color: #222;
  font-size: 13px;
`;

const ToolSlot = styled.div`
  display: flex;
  align-items: center;
  justify-content: center;
  width: 24px;
  margin-right: 20px;

  & + & {
    margin-right: 12px;
  }
`;

const YaCircle = styled.div`
  display: flex;
  align-items: center;
  justify-content: center;
  width: 18px;
  height: 18px;
  border: 1.2px solid #333;
  border-radius: 50%;
  color: #333;
  font: 400 11px "Liberation Sans", sans-serif;
`;

const AddressBar = styled.div`
  display: flex;
  align-items: center;
  flex: 0 0 900px;
  height: 32px;
  padding: 0 18px 0 4px;
  box-sizing: border-box;
  border-radius: 12px;
  background: #f0f0f0;
`;

const GlobeChip = styled.div`
  display: flex;
  align-items: center;
  justify-content: center;
  width: 24px;
  height: 24px;
  border-radius: 8px;
  background: #dcdcdc;
`;

const HostChip = styled.div`
  display: flex;
  align-items: center;
  justify-content: center;
  width: 129px;
  height: 24px;
  margin-left: 2px;
  border-radius: 8px;
  background: #e2e2e2;
  color: #6a6a6a;
  font-size: 15px;
`;

const PageTitle = styled.div`
  flex: 1;
  padding-left: 271px;
  color: #333;
  font-size: 15.5px;
`;

const ZoomPill = styled.div`
  display: flex;
  align-items: center;
  flex: 0 0 105px;
  height: 32px;
  margin-left: 4px;
  padding-left: 12px;
  box-sizing: border-box;
  border: 1px solid #ececec;
  border-radius: 12px;
`;

const ZoomValue = styled.span`
  margin-left: 5px;
  color: #222;
  font-size: 12px;
  letter-spacing: -0.3px;
`;

const PillDivider = styled.div`
  width: 1px;
  height: 20px;
  margin-left: 8px;
  background: #e4e4e4;
`;

const Kebab = styled.div`
  display: flex;
  flex-direction: column;
  gap: 3px;
  margin-left: 15px;

  i {
    width: 2.4px;
    height: 2.4px;
    border-radius: 50%;
    background: #333;
  }
`;

const ToolDivider = styled.div`
  width: 1px;
  height: 20px;
  margin: 0 6.5px 0 5px;
  background: #e4e4e4;
`;

const Extensions = styled.div`
  display: flex;
`;

const ExtSlot = styled.div`
  display: flex;
  align-items: center;
  justify-content: center;
  width: 44px;
  height: 32px;
`;

const FxTile = styled.div`
  display: flex;
  align-items: center;
  justify-content: center;
  width: 20px;
  height: 20px;
  border-radius: 3px;
  background: #2b2b2b;
  color: #fff;
  font: italic 700 13px "Liberation Serif", serif;
`;

const PdfStack = styled.div`
  position: relative;
  display: flex;
`;

const Badge = styled.span<{ $bg: string }>`
  position: absolute;
  right: -6px;
  bottom: -4px;
  display: flex;
  align-items: center;
  justify-content: center;
  width: 12px;
  height: 12px;
  border: 1px solid #fff;
  border-radius: 50%;
  background: ${(p) => p.$bg};
  color: #fff;
  font: 700 9px "Liberation Sans", sans-serif;
`;

const BookmarkBar = styled.div`
  display: flex;
  align-items: center;
  flex: 1;
  padding-left: 15px;
`;

const Bookmark = styled.div<{ $w: number }>`
  display: flex;
  align-items: center;
  flex: 0 0 ${(p) => p.$w}px;
  min-width: 0;
`;

const BookmarkIcon = styled.span`
  display: flex;
  flex: 0 0 auto;
  align-items: center;
  margin-right: 4px;
`;

const BookmarkLabel = styled.span<{ $fade?: boolean; $spaced?: boolean }>`
  overflow: hidden;
  white-space: nowrap;
  max-width: ${(p) => (p.$fade ? "106px" : "none")};
  color: ${(p) => (p.$spaced ? "#555" : "#222")};
  font-size: 12.5px;
  letter-spacing: ${(p) => (p.$spaced ? "1px" : "-0.1px")};
  ${(p) => p.$fade && "-webkit-mask-image: linear-gradient(90deg, #000 75%, transparent);"}
`;

const Tile = styled.span<{ $bg: string; $fg: string; $size: number }>`
  display: flex;
  align-items: center;
  justify-content: center;
  width: 16px;
  height: 16px;
  border-radius: 3px;
  background: ${(p) => p.$bg};
  color: ${(p) => p.$fg};
  font: 700 ${(p) => p.$size}px "Liberation Sans", sans-serif;
`;

const More = styled.div`
  display: flex;
  margin-left: 6px;
`;

const OtherBookmarks = styled.div`
  display: flex;
  align-items: center;
  gap: 6px;
  margin-left: 30px;
  color: #222;
  font-size: 12.8px;
`;

const Page = styled.div`
  position: relative;
  flex: 1;
  padding: 14px;
  background: #fff;
  color: #000;
  font: 28px "Liberation Serif", serif;
`;

const Legend = styled.div`
  line-height: 56px;
`;

const Swatch = styled.span<{ $bg: string; $fg: string }>`
  padding: 8.75px;
  background: ${(p) => p.$bg};
  color: ${(p) => p.$fg};
`;

const Buttons = styled.div`
  margin-top: 18px;
  height: 36px;
`;

const PageButton = styled.button`
  height: 36px;
  padding: 0 12.5px;
  border: 1.75px solid #767676;
  border-radius: 5px;
  background: #efefef;
  color: #000;
  font: 23.33px "Liberation Sans", sans-serif;
  vertical-align: top;
`;

const Current = styled.div``;

const ShareX = styled.div`
  position: absolute;
  left: 490px;
  top: 222px;
  width: 844px;
  height: 516px;
  border-radius: 8px;
  overflow: hidden;
  background: #2a2a2a;
  box-shadow: 0 24px 70px rgba(0, 0, 0, 0.42), 0 0 12px rgba(0, 0, 0, 0.25);
  color: #e2e2e2;
  font-family: "Noto Sans", sans-serif;
`;

const TitleBar = styled.div`
  display: flex;
  align-items: center;
  height: 30px;
  padding: 0 0 0 8px;
  background: #1f1f1f;
`;

const WinTitle = styled.span`
  margin-left: 5px;
  color: #858585;
  font-size: 11.4px;
`;

const WinControls = styled.div`
  display: flex;
  align-items: center;
  gap: 33px;
  margin-left: auto;
  padding-right: 15px;
`;

const WinBody = styled.div`
  display: flex;
`;

const AppMenu = styled.div`
  flex: 0 0 180px;
  padding: 5px 0 0 8px;
  margin-right: 18px;
`;

const MenuRow = styled.div`
  position: relative;
  display: flex;
  align-items: center;
  height: 24px;
`;

const MenuGlyph = styled.span`
  display: flex;
  flex: 0 0 16px;
  justify-content: center;
`;

const MenuLabel = styled.span`
  margin-left: 2px;
  padding-left: 1px;
  font-size: 12.3px;
  white-space: nowrap;
`;

const MenuArrow = styled.i`
  position: absolute;
  right: 10px;
  top: 8px;
  border-left: 4px solid #e2e2e2;
  border-top: 4px solid transparent;
  border-bottom: 4px solid transparent;
`;

const MenuSep = styled.div`
  height: 1px;
  margin: 6px 7px 8px 0;
  background: #1f1f1f;
`;

const HotkeyTable = styled.table`
  align-self: flex-start;
  width: 586px;
  margin-top: 16px;
  border-collapse: collapse;
  table-layout: fixed;
  background: #2e2e2e;
  font-size: 14.8px;

  tr {
    height: 33px;
  }
`;

const StatusHead = styled.th`
  width: 7px;
  padding: 0;
  border: 1px solid #1e1e1e;
`;

const HeadCell = styled.th`
  padding: 0;
  border: 1px solid #1e1e1e;
  font-size: 14.5px;
  font-weight: 400;
  text-align: center;

  &:nth-child(2) {
    width: 205px;
  }
`;

const StatusCell = styled.td<{ $ok: boolean }>`
  padding: 0;
  border: 1px solid #1e1e1e;
  background-color: ${(p) => (p.$ok ? "#50b058" : "#dc4464")};
  background-image: repeating-conic-gradient(rgba(0, 0, 0, 0.08) 0 25%, transparent 0 50%);
  background-size: 2px 2px;
`;

const KeysCell = styled.td`
  padding: 0;
  border: 1px solid #1e1e1e;
  text-align: center;
  white-space: nowrap;
  word-spacing: 1.4px;
`;

const TextCell = styled.td`
  padding: 0 0 0 11px;
  border: 1px solid #1e1e1e;
  white-space: nowrap;
`;

const Pointer = styled.svg`
  position: absolute;
  left: 82px;
  top: 407px;
`;
